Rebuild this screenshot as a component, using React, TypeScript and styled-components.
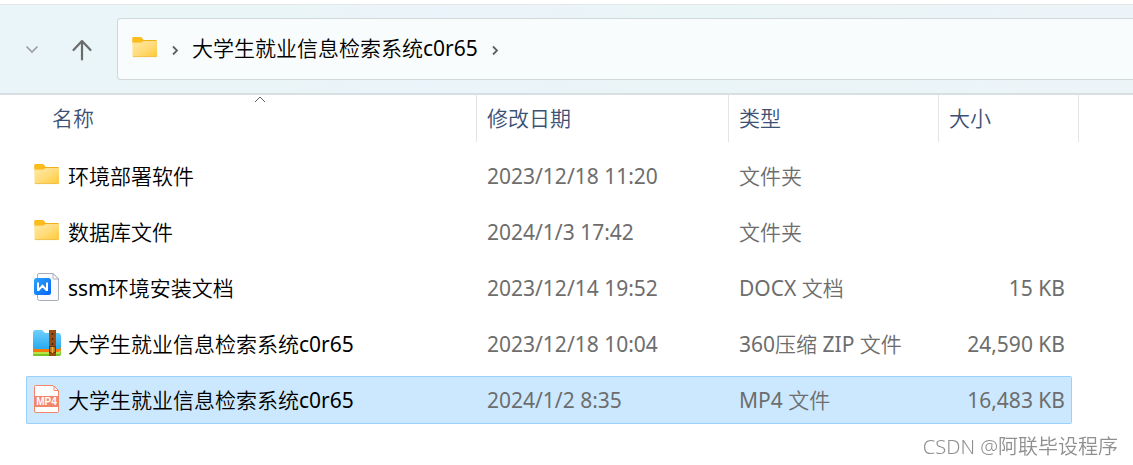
import React from "react";
import styled, { createGlobalStyle, css } from "styled-components";

const GlobalStyle = createGlobalStyle`
  *, *::before, *::after { box-sizing: border-box; }
  body {
    margin: 0;
    background: #ffffff;
    color: #000000;
    font-family: "Noto Sans", "Noto Sans CJK SC DemiLight", "Noto Sans CJK SC", sans-serif;
    font-size: 21px;
    font-weight: 400;
    line-height: 28px;
  }
`;

const Explorer = styled.div`
  display: flex;
  flex-direction: column;
  min-height: 100vh;
  padding-top: 4px;
  overflow: hidden;
`;

const Toolbar = styled.nav`
  display: flex;
  align-items: center;
  height: 91px;
  padding-left: 18px;
  border-top: 1px solid #e4e7e8;
  border-bottom: 2px solid #d7dfe2;
  background: linear-gradient(100deg, #e9f5f8 0%, #eaf5f7 24%, #ebf4fa 38%, #eaf5f7 60%, #ecf4f8 100%);
`;

const NavButton = styled.button<{ $gap: number }>`
  display: flex;
  align-items: center;
  justify-content: center;
  width: 28px;
  height: 28px;
  margin: 0 ${(p) => p.$gap}px 0 0;
  padding: 0;
  border: 0;
  background: none;
`;

const AddressBar = styled.div`
  display: flex;
  flex: 1;
  align-items: center;
  height: 62px;
  padding-left: 13px;
  border: 1px solid #d1d8da;
  border-right: 0;
  border-radius: 4px 0 0 4px;
  background: #f9fcfd;
`;

const CrumbButton = styled.button`
  display: flex;
  align-items: center;
  justify-content: center;
  width: 32px;
  height: 28px;
  padding: 0;
  border: 0;
  background: none;
`;

const Crumb = styled.a`
  padding: 0 2px 2px 0;
  color: #000000;
  text-decoration: none;
  white-space: nowrap;
`;

const FileTable = styled.table`
  width: 1053px;
  margin-left: 26px;
  table-layout: fixed;
  border-collapse: separate;
  border-spacing: 0;
`;

const Col = styled.col<{ $width: number }>`
  width: ${(p) => p.$width}px;
`;

const HeaderCell = styled.th`
  height: 53px;
  padding: 0;
  vertical-align: top;
  text-align: left;
  font-weight: 300;
`;

const HeaderButton = styled.button<{ $indent?: boolean }>`
  position: relative;
  display: block;
  width: ${(p) => (p.$indent ? "calc(100% - 16px)" : "100%")};
  height: 47px;
  margin-left: ${(p) => (p.$indent ? 16 : 0)}px;
  padding: 0 10px 2px;
  border: 0;
  border-right: 1px solid #e2e4e6;
  background: none;
  color: #3b5175;
  font: inherit;
  text-align: left;
`;

const SortMark = styled.svg`
  position: absolute;
  top: 1px;
  left: 50%;
  margin-left: -5px;
`;

const BodyCell = styled.td`
  padding: 4px 0;
`;

const selectedFill = css`
  border-color: #99d1ff;
  background: #cce8ff;
`;

const CellBox = styled.div<{ $selected?: boolean; $tone?: "name" | "info" | "size" }>`
  display: flex;
  align-items: center;
  height: 48px;
  padding-left: ${(p) => (p.$tone === "name" ? 6 : 10)}px;
  border: 0 solid transparent;
  border-width: 1px 0;
  color: #6d6d6d;
  white-space: nowrap;
  ${(p) =>
    p.$tone === "name" &&
    css`
      gap: 6px;
      border-left-width: 1px;
      border-radius: 2px 0 0 2px;
      color: #000000;
    `}
  ${(p) =>
    p.$tone === "size" &&
    css`
      justify-content: flex-end;
      margin-right: 7px;
      padding-right: 6px;
      border-right-width: 1px;
      border-radius: 0 2px 2px 0;
    `}
  ${(p) => p.$selected && selectedFill}
`;

const Watermark = styled.footer`
  position: fixed;
  right: 15px;
  bottom: 4px;
  color: #8f8f8f;
  font-size: 20px;
  font-weight: 300;
  white-space: nowrap;
`;

const FolderIcon = () => (
  <svg width="29" height="30" viewBox="0 0 29 30" aria-hidden="true">
    <defs>
      <linearGradient id="folderFace" x1="0" y1="0" x2="1" y2="1">
        <stop offset="0" stopColor="#ffe8a0" />
        <stop offset="0.5" stopColor="#ffdc7c" />
        <stop offset="1" stopColor="#ffc933" />
      </linearGradient>
    </defs>
    <path d="M1.500 4.200q0-1.200 1.200-1.200h7.300l2.500 3h12.200q1.300 0 1.300 1.300v3H1.500z" fill="#f3ae1b" />
    <path d="M1.500 4.200q0-1.200 1.200-1.200h7.300l2.500 3-1.700 2H1.500z" fill="#fcbd1c" />
    <path d="M1.500 8.500h8.700l2.200-1.500H26v15q0 1-1 1H2.500q-1 0-1-1z" fill="url(#folderFace)" />
    <path d="M2 22.600h23.500" stroke="#eebc48" strokeWidth="0.800" />
  </svg>
);

const DocxIcon = () => (
  <svg width="29" height="30" viewBox="0 0 29 30" aria-hidden="true">
    <defs>
      <linearGradient id="docBadge" x1="0" y1="0" x2="1" y2="1">
        <stop offset="0" stopColor="#2ba5ff" />
        <stop offset="1" stopColor="#0864f5" />
      </linearGradient>
    </defs>
    <path d="M6 .5h14l5.500 5.500v20q0 1.500-1.500 1.500H6.500q-2 0-2-2V2q0-1.500 1.500-1.500z" fill="#fafbfc" stroke="#a8adb8" />
    <path d="M20 .5V5q0 1 1 1h4.500z" fill="#fff" stroke="#a8adb8" />
    <rect x="1" y="5" width="17" height="17" rx="2.500" fill="url(#docBadge)" />
    <path d="M5 9.500v7.500h.6L9.500 12.800l3.900 4.200h.6V9.500" fill="none" stroke="#fff" strokeWidth="2" />
  </svg>
);

const ZipIcon = () => (
  <svg width="29" height="30" viewBox="0 0 29 30" aria-hidden="true">
    <defs>
      <linearGradient id="zipFace" x1="0" y1="0" x2="0" y2="1">
        <stop offset="0" stopColor="#70d0fb" />
        <stop offset="1" stopColor="#27aaf2" />
      </linearGradient>
    </defs>
    <path d="M0 20h28v5q0 2-2 2H1q-1 0-1-1z" fill="#75c629" />
    <path d="M0 20h28v2q0 3-3 3H0z" fill="#b6e54b" />
    <path d="M0 16h28v4q0 3-4 3H0z" fill="#f47b0b" />
    <path d="M0 3.500Q0 1 2.500 1H9l3 3h13q3 0 3 3v10q0 3-3 3H3q-3 0-3-3z" fill="url(#zipFace)" />
    <rect x="16" y="1" width="7" height="26" fill="#9a4d12" />
    <path d="M19.500 4v2m0 3v2m0 3v2" stroke="#4e250b" strokeWidth="1.500" />
    <rect x="16.500" y="17.500" width="6" height="6" fill="#bd7420" stroke="#633611" />
    <path d="M19.500 18v6" stroke="#efba40" strokeWidth="1.500" />
  </svg>
);

const Mp4Icon = () => (
  <svg width="29" height="30" viewBox="0 0 29 30" aria-hidden="true">
    <path d="M1.500 1.500q0-1 1-1H20L25.500 6v20.500q0 1-1 1H3q-1.500 0-1.500-1.500z" fill="#fff" stroke="#f1866d" />
    <path d="M21 1v4.500h4.500z" fill="#fff" stroke="#f1866d" />
    <rect x="1" y="11" width="25" height="11" fill="#f2866c" />
    <text x="13.500" y="20" textAnchor="middle" fill="#fff" fontFamily="Liberation Sans, sans-serif" fontSize="10" fontWeight="700">
      MP4
    </text>
  </svg>
);

const CrumbChevron = () => (
  <svg width="10" height="14" viewBox="0 0 10 14" aria-hidden="true">
    <path d="M2 4.500 6 8.500 2 12.500" fill="none" stroke="#5f6263" strokeWidth="1.800" />
  </svg>
);

const icons = { folder: FolderIcon, docx: DocxIcon, zip: ZipIcon, mp4: Mp4Icon };

type FileEntry = {
  icon: keyof typeof icons;
  name: string;
  date: string;
  type: string;
  size: string;
  selected?: boolean;
};

const files: FileEntry[] = [
  { icon: "folder", name: "环境部署软件", date: "2023/12/18 11:20", type: "文件夹", size: "" },
  { icon: "folder", name: "数据库文件", date: "2024/1/3 17:42", type: "文件夹", size: "" },
  { icon: "docx", name: "ssm环境安装文档", date: "2023/12/14 19:52", type: "DOCX 文档", size: "15 KB" },
  { icon: "zip", name: "大学生就业信息检索系统c0r65", date: "2023/12/18 10:04", type: "360压缩 ZIP 文件", size: "24,590 KB" },
  { icon: "mp4", name: "大学生就业信息检索系统c0r65", date: "2024/1/2 8:35", type: "MP4 文件", size: "16,483 KB", selected: true },
];

const FileRow = ({ icon, name, date, type, size, selected }: FileEntry) => {
  const Icon = icons[icon];
  return (
    <tr aria-selected={selected}>
      <BodyCell>
        <CellBox $tone="name" $selected={selected}>
          <Icon />
          {name}
        </CellBox>
      </BodyCell>
      <BodyCell>
        <CellBox $selected={selected}>{date}</CellBox>
      </BodyCell>
      <BodyCell>
        <CellBox $selected={selected}>{type}</CellBox>
      </BodyCell>
      <BodyCell>
        <CellBox $tone="size" $selected={selected}>{size}</CellBox>
      </BodyCell>
    </tr>
  );
};

export default function App() {
  return (
    <Explorer>
      <GlobalStyle />
      <Toolbar>
        <NavButton $gap={22} aria-label="最近位置">
          <svg width="14" height="14" viewBox="0 0 14 14" aria-hidden="true">
            <path d="M1.500 4.500 7 10 12.500 4.500" fill="none" stroke="#a09fa1" strokeWidth="1.700" />
          </svg>
        </NavButton>
        <NavButton $gap={21} aria-label="上移">
          <svg width="22" height="24" viewBox="0 0 22 24" aria-hidden="true">
            <path d="M11 22.500V4M2.500 13 11 4l8.500 9" fill="none" stroke="#6b6b6b" strokeWidth="2.200" strokeLinejoin="round" strokeLinecap="round" />
          </svg>
        </NavButton>
        <AddressBar>
          <FolderIcon />
          <CrumbButton aria-label="展开">
            <CrumbChevron />
          </CrumbButton>
          <Crumb href="#">大学生就业信息检索系统c0r65</Crumb>
          <CrumbButton aria-label="展开子文件夹">
            <CrumbChevron />
          </CrumbButton>
        </AddressBar>
      </Toolbar>
      <FileTable>
        <colgroup>
          <Col $width={451} />
          <Col $width={252} />
          <Col $width={210} />
          <Col $width={140} />
        </colgroup>
        <thead>
          <tr>
            <HeaderCell>
              <HeaderButton $indent>
                <SortMark width="12" height="7" viewBox="0 0 12 7" aria-hidden="true">
                  <path d="M1 6 6 1l5 5" fill="none" stroke="#606060" />
                </SortMark>
                名称
              </HeaderButton>
            </HeaderCell>
            <HeaderCell>
              <HeaderButton>修改日期</HeaderButton>
            </HeaderCell>
            <HeaderCell>
              <HeaderButton>类型</HeaderButton>
            </HeaderCell>
            <HeaderCell>
              <HeaderButton>大小</HeaderButton>
            </HeaderCell>
          </tr>
        </thead>
        <tbody>
          {files.map((file) => (
            <FileRow key={file.icon + file.name} {...file} />
          ))}
        </tbody>
      </FileTable>
      <Watermark>CSDN @阿联毕设程序</Watermark>
    </Explorer>
  );
}
